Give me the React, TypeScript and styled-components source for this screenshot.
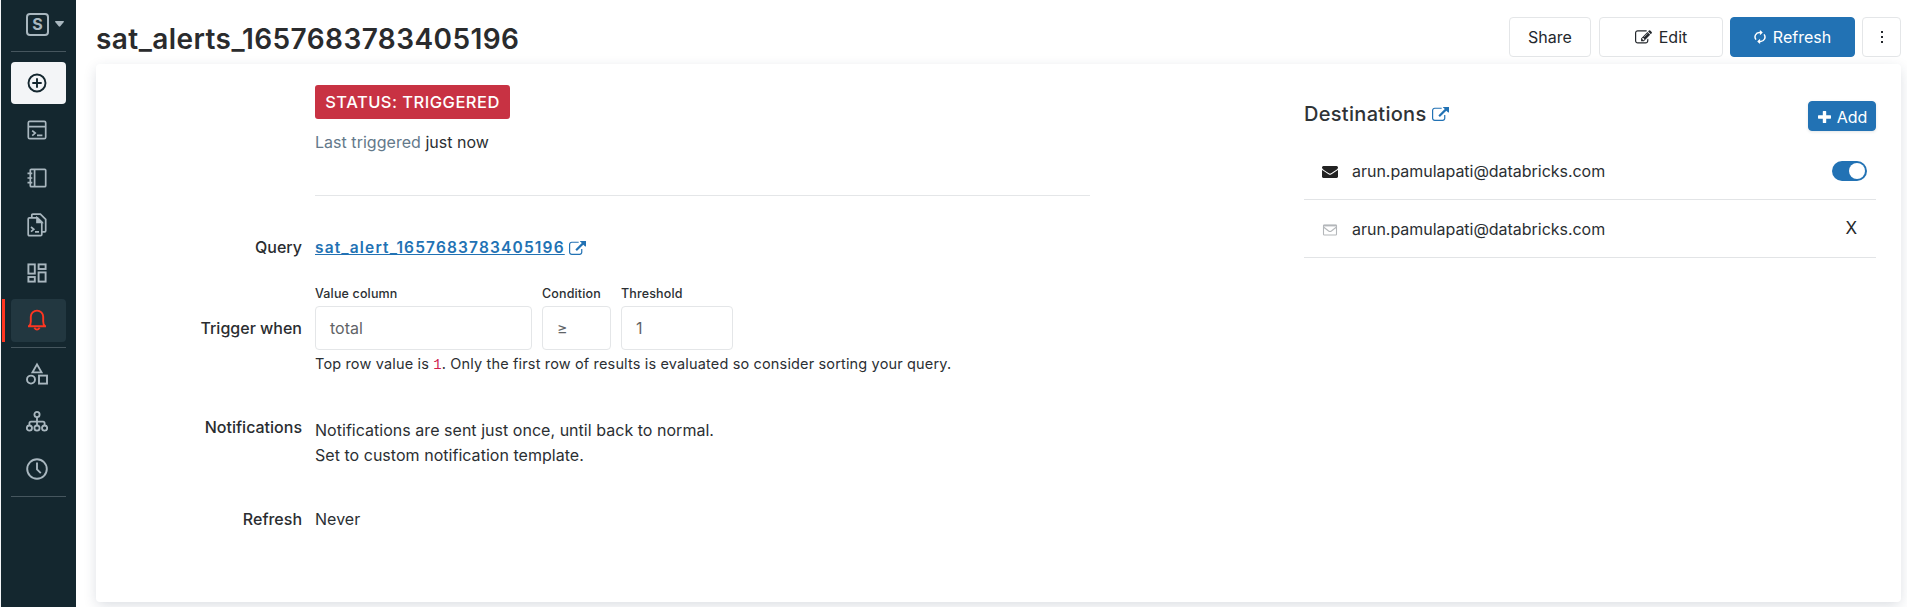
import React from 'react';
import styled, { createGlobalStyle, css } from 'styled-components';

const GlobalStyle = createGlobalStyle`
  *, *::before, *::after { box-sizing: border-box; }
  body {
    margin: 0;
    background: #fff;
    color: #2b2f33;
    font-family: Inter, 'Liberation Sans', sans-serif;
    font-size: 16px;
    overflow: hidden;
  }
  svg { display: block; flex: none; }
`;

const blue = '#2272b4';

const Page = styled.div`
  display: flex;
  height: 607px;
  overflow: hidden;
`;

/* ---------- Sidebar ---------- */

const Sidebar = styled.nav`
  display: flex;
  flex-direction: column;
  flex: none;
  width: 76px;
  border-left: 1px solid #f4f6f8;
  padding-left: 1px;
  background: #14272f;
  color: #a9b7bf;
`;

const Workspace = styled.div`
  display: flex;
  align-items: center;
  gap: 6px;
  height: 51px;
  padding: 0 0 3px 24px;
`;

const WorkspaceLetter = styled.span`
  display: grid;
  place-items: center;
  width: 23px;
  height: 23px;
  border: 2px solid currentColor;
  border-radius: 4px;
  font-size: 16px;
  font-weight: 700;
  line-height: 1;
`;

const Rule = styled.div`
  height: 1px;
  margin: 0 10px 0 9px;
  background: #46565e;
`;

const NavGroup = styled.div<{ $top: number; $gap: number; $bottom: number }>`
  display: flex;
  flex-direction: column;
  gap: ${(p) => p.$gap}px;
  padding: ${(p) => p.$top}px 0 ${(p) => p.$bottom}px;
`;

const NavItem = styled.div<{ $kind?: 'create' | 'active' }>`
  display: flex;
  align-items: center;
  justify-content: center;
  height: 42px;
  padding: 0 10px 0 6px;
  border-left: 3px solid transparent;
  ${(p) => p.$kind === 'active' && css`
    height: 43px;
    border-left-color: #ff3621;
    color: #ff3621;
  `}
  ${(p) => p.$kind === 'create' && css`color: #14272f;`}
`;

const NavTile = styled.span<{ $kind?: 'create' | 'active' }>`
  display: grid;
  place-items: center;
  width: 55px;
  height: 100%;
  padding-right: 3px;
  border-radius: 4px;
  background: ${(p) => (p.$kind === 'create' ? '#f3f5f7' : p.$kind === 'active' ? '#223740' : 'transparent')};
`;

/* ---------- Header ---------- */

const Main = styled.main`
  display: flex;
  flex-direction: column;
  flex: 1;
  min-width: 0;
  padding: 0 6px 5px 20px;
`;

const Header = styled.header`
  display: flex;
  justify-content: space-between;
  height: 64px;
  padding-top: 17px;
`;

const Title = styled.h1`
  margin: 5px 0 0;
  font-size: 28px;
  line-height: 34px;
  font-weight: 600;
  letter-spacing: 0.43px;
  color: #2a2b2d;
`;

const Actions = styled.div`
  display: flex;
  gap: 7px;
`;

const Button = styled.button<{ $width: number; $primary?: boolean }>`
  display: flex;
  align-items: center;
  justify-content: center;
  gap: 7px;
  width: ${(p) => p.$width}px;
  height: 40px;
  padding: 0;
  border: 1px solid ${(p) => (p.$primary ? blue : '#e4e6e8')};
  border-radius: 4px;
  background: ${(p) => (p.$primary ? blue : '#fff')};
  color: ${(p) => (p.$primary ? '#fff' : '#24282d')};
  font-family: inherit;
  font-size: 16px;
`;

const ShareButton = styled(Button)`
  margin-right: 1px;
`;

const AddButton = styled(Button)`
  height: 30px;
  gap: 6px;
  padding: 2px 0 0 1px;
  box-shadow: 0 1px 3px rgba(27, 49, 57, 0.12);
`;

/* ---------- Card ---------- */

const Card = styled.section`
  display: flex;
  flex: 1;
  border-radius: 4px;
  background: #fff;
  box-shadow: 0 4px 14px -1px rgba(27, 49, 75, 0.17);
`;

const Details = styled.div`
  width: 994px;
  padding-top: 21px;
`;

const Field = styled.div<{ $height: number }>`
  display: flex;
  height: ${(p) => p.$height}px;
`;

const FieldLabel = styled.div<{ $offset?: number }>`
  width: 206px;
  margin-right: 13px;
  padding-top: ${(p) => p.$offset || 0}px;
  text-align: right;
  font-weight: 500;
  line-height: 25px;
  color: #2a2d30;
`;

const FieldBody = styled.div<{ $offset?: number }>`
  flex: 1;
  padding-top: ${(p) => p.$offset || 0}px;
  line-height: 25px;
  letter-spacing: 0.03px;
`;

const StatusBody = styled(FieldBody)`
  flex: none;
  width: 775px;
  height: 111px;
  border-bottom: 1px solid #e4e6e8;
`;

const StatusBadge = styled.span`
  display: inline-flex;
  align-items: center;
  justify-content: center;
  width: 195px;
  height: 34px;
  border-radius: 3px;
  background: #c83243;
  color: #fff;
  font-weight: 500;
  font-size: 16.5px;
  letter-spacing: 0.48px;
`;

const LastTriggered = styled.div`
  margin-top: 11px;
  color: #2b2f33;

  span { color: #64798a; }
`;

const QueryLink = styled.a`
  display: inline-flex;
  align-items: center;
  gap: 4px;
  color: ${blue};

  span {
    font-size: 15.5px;
    font-weight: 600;
    letter-spacing: 1.16px;
    line-height: 18px;
    text-decoration: underline;
    text-decoration-skip-ink: none;
    text-underline-offset: 1px;
    text-decoration-thickness: 1px;
  }
`;

const Controls = styled.div`
  display: flex;
  gap: 10px;
`;

const Control = styled.div<{ $width: number }>`
  width: ${(p) => p.$width}px;
`;

const ControlLabel = styled.div`
  height: 24px;
  font-size: 12.5px;
  font-weight: 500;
  line-height: 24px;
  letter-spacing: 0.15px;
  white-space: nowrap;
`;

const ControlBox = styled.div`
  display: flex;
  align-items: center;
  height: 44px;
  padding-left: 14px;
  border: 1px solid #e4e6e8;
  border-radius: 4px;
  color: #5f6467;
`;

const Hint = styled.div`
  margin-top: 2px;
  font-size: 14.5px;
  line-height: 24px;
  letter-spacing: 0.155px;
  white-space: nowrap;
`;

const HintValue = styled.code`
  font-family: 'Liberation Mono', monospace;
  font-size: 14px;
  color: #d0214f;
`;

/* ---------- Destinations ---------- */

const Destinations = styled.aside`
  flex: 1;
  padding: 37px 25px 0 214px;
`;

const DestinationsHead = styled.div`
  display: flex;
  justify-content: space-between;
  height: 41px;
`;

const DestinationsTitle = styled.h2`
  display: flex;
  align-items: center;
  gap: 5px;
  height: 26px;
  margin: 0;
  font-size: 20px;
  font-weight: 500;
  letter-spacing: 0.3px;
  color: #2f3336;

  svg { color: ${blue}; }
`;

const Destination = styled.div`
  display: flex;
  align-items: center;
  height: 58px;
  padding: 0 9px 0 18px;
  border-bottom: 1px solid #e2e4e6;
`;

const DestinationIcon = styled.span<{ $muted?: boolean }>`
  width: 30px;
  padding-top: 3px;
  color: ${(p) => (p.$muted ? '#b4b7ba' : '#222')};
`;

const Address = styled.span`
  flex: 1;
  letter-spacing: -0.03px;
`;

const Toggle = styled.span`
  display: flex;
  justify-content: flex-end;
  width: 35px;
  height: 20px;
  padding: 2px;
  border-radius: 10px;
  background: ${blue};

  &::after {
    content: '';
    width: 16px;
    height: 16px;
    border-radius: 50%;
    background: #fff;
  }
`;

const Remove = styled.span`
  margin: -2px 10px 0 0;
  font-size: 17px;
  color: #26292c;
`;

/* ---------- Icons ---------- */

const stroke = { fill: 'none', stroke: 'currentColor', strokeWidth: 1.7 } as const;

const CaretIcon = () => (
  <svg width="9" height="6" viewBox="0 0 9 6" fill="currentColor"><path d="M.6 0h7.8q.8.2.4 1L5.3 5.2q-.8.9-1.6 0L.2 1Q-.2.2.6 0z" /></svg>
);
const PlusCircleIcon = () => (
  <svg width="20" height="20" viewBox="0 0 20 20" {...stroke} strokeWidth={1.9}><circle cx="10" cy="10" r="8.5" /><path d="M10 5.3v9.4M5.3 10h9.4" /></svg>
);
const EditorIcon = () => (
  <svg width="20" height="20" viewBox="0 0 20 20" {...stroke}><rect x="1.3" y="1.3" width="17.4" height="17.4" rx="1.4" /><path d="M1.3 6.7h17.4M5.2 10.6l3 2.5-3 2.5M10 15.4h5.4" /></svg>
);
const NotebookIcon = () => (
  <svg width="20" height="20" viewBox="0 0 20 20" {...stroke}><rect x="3.3" y="1.3" width="15.4" height="17.4" rx="1" /><path d="M7.6 1.3v17.4M.5 5.4h4.8M.5 10h4.8M.5 14.6h4.8" /></svg>
);
const QueriesIcon = () => (
  <svg width="20" height="24" viewBox="0 0 20 24" {...stroke}><path d="M1.2 6q0-1.2 1.2-1.2h8l4.4 4.4v12.2q0 1.2-1.2 1.2H2.4q-1.2 0-1.2-1.2z" /><path d="M10 4.8v4.6h4.8z" fill="currentColor" /><path d="M4.8 4.6V2.2q0-1 1-1h7.6l5.3 5.2v11.4q0 1-1 1h-2.6M4 14l2.8 2.3L4 18.6M8 18.8h4" /></svg>
);
const DashboardIcon = () => (
  <svg width="20" height="20" viewBox="0 0 20 20" {...stroke} strokeWidth={1.9}><rect x="1.4" y="1.4" width="6.4" height="9.2" /><rect x="11.6" y="1.4" width="7" height="4.6" /><rect x="1.4" y="14" width="6.4" height="4.6" /><rect x="11.6" y="9.4" width="7" height="9.2" /></svg>
);
const BellIcon = () => (
  <svg width="20" height="22" viewBox="0 0 20 22" {...stroke} strokeWidth={1.9}><path d="M1 17.2h18M2.2 16.8c1.4-1 1.6-2.2 1.6-4.3V7.8a6.2 6.2 0 0 1 12.4 0v4.7c0 2.1.2 3.3 1.6 4.3" /><path d="M7.3 18.8q2.7 3.6 5.4 0" /></svg>
);
const ShapesIcon = () => (
  <svg width="22" height="23" viewBox="0 0 22 23" {...stroke} strokeWidth={1.9}><path d="M11 2.4l4.5 8h-9z" /><circle cx="5" cy="17.6" r="4" /><rect x="13" y="13.6" width="8" height="8" /></svg>
);
const TreeIcon = () => (
  <svg width="22" height="21" viewBox="0 0 22 21" {...stroke} strokeWidth={1.8}><circle cx="11" cy="3.5" r="2.6" /><circle cx="3.4" cy="17.1" r="2.6" /><circle cx="11" cy="17.1" r="2.6" /><circle cx="18.6" cy="17.1" r="2.6" /><path d="M11 6.1v8.4M3.4 14.5v-2.2q0-1.6 1.6-1.6h12q1.6 0 1.6 1.6v2.2" /></svg>
);
const ClockIcon = () => (
  <svg width="22" height="22" viewBox="0 0 22 22" {...stroke} strokeWidth={1.9}><circle cx="11" cy="11" r="9.8" /><path d="M11 4.6v6.8l3.8 3.8" /></svg>
);
const ExternalIcon = () => (
  <svg width="17" height="14" viewBox="0 64 1792 1472" fill="currentColor"><path d="M1408 928v320q0 119-84.5 203.5t-203.5 84.5h-832q-119 0-203.5-84.5t-84.5-203.5v-832q0-119 84.5-203.5t203.5-84.5h704q14 0 23 9t9 23v64q0 14-9 23t-23 9h-704q-66 0-113 47t-47 113v832q0 66 47 113t113 47h832q66 0 113-47t47-113v-320q0-14 9-23t23-9h64q14 0 23 9t9 23zm384-864v512q0 26-19 45t-45 19-45-19l-176-176-652 652q-10 10-23 10t-23-10l-114-114q-10-10-10-23t10-23l652-652-176-176q-19-19-19-45t19-45 45-19h512q26 0 45 19t19 45z" /></svg>
);
const PencilIcon = () => (
  <svg width="17" height="17" viewBox="0 0 1792 1792" fill="currentColor"><path d="M888 1184l116-116-152-152-116 116v56h96v96h56zm440-720q-16-16-33 1l-350 350q-17 17-1 33t33-1l350-350q17-17 1-33zm80 594v190q0 119-84.5 203.5t-203.5 84.5h-832q-119 0-203.5-84.5t-84.5-203.5v-832q0-119 84.5-203.5t203.5-84.5h832q63 0 117 25 15 7 18 23 3 17-9 29l-49 49q-14 14-32 8-23-6-45-6h-832q-66 0-113 47t-47 113v832q0 66 47 113t113 47h832q66 0 113-47t47-113v-126q0-13 9-22l64-64q15-15 35-7t20 29zm-96-738l288 288-672 672h-288v-288zm444 132l-92 92-288-288 92-92q28-28 68-28t68 28l152 152q28 28 28 68t-28 68z" /></svg>
);
const SyncIcon = () => (
  <svg width="12" height="14" viewBox="0 0 12 14" fill="none" stroke="currentColor" strokeWidth="1.5"><path d="M7.6 2.6H5.4A4.3 4.3 0 0 0 2 9.6M4.4 11.4h2.2A4.3 4.3 0 0 0 10 4.4" /><path d="M5.9 0l2.9 2.6-2.9 2.6zM6.1 8.8l-2.9 2.6L6.1 14z" fill="currentColor" stroke="none" /></svg>
);
const KebabIcon = () => (
  <svg width="2" height="12" viewBox="0 0 2 12" fill="currentColor"><path d="M0 0h2v2H0zM0 5h2v2H0zM0 10h2v2H0z" /></svg>
);
const PlusIcon = () => (
  <svg width="13" height="12" viewBox="0 0 13 12" fill="currentColor"><path d="M5.4 0h2.2q.6 0 .6.6v3.7h4.2q.6 0 .6.6v2.2q0 .6-.6.6H8.2v3.7q0 .6-.6.6H5.4q-.6 0-.6-.6V7.7H.6Q0 7.7 0 7.1V4.9q0-.6.6-.6h4.2V.6q0-.6.6-.6z" /></svg>
);
const MailIcon = () => (
  <svg width="16" height="12" viewBox="0 256 1792 1408" preserveAspectRatio="none" fill="currentColor"><path d="M1792 710v794q0 66-47 113t-113 47h-1472q-66 0-113-47t-47-113v-794q44 49 101 87 362 246 497 345 57 42 92.5 65.5t94.5 48 110 24.5h2q51 0 110-24.5t94.5-48 92.5-65.5q170-123 498-345 57-39 100-87zm0-294q0 79-49 151t-122 123q-376 261-468 325-10 7-42.5 31t-54 38.5-52 32.5-57.5 27-50 9h-2q-23 0-50-9t-57.5-27-52-32.5-54-38.5-42.5-31q-91-64-262-182.5t-205-142.5q-62-42-117-115.5t-55-136.5q0-78 41.5-130t118.5-52h1472q65 0 112.5 47t47.5 113z" /></svg>
);
const MailOutlineIcon = () => (
  <svg width="16" height="12" viewBox="0 0 16 12" fill="none" stroke="currentColor" strokeWidth="1.1"><rect x="1.5" y="1" width="13" height="10" rx=".8" /><path d="M1.5 1.6h13" strokeWidth="1.6" /><path d="M1.8 3.2L6.6 7q1.4 1 2.8 0l4.8-3.8" /></svg>
);

/* ---------- Page ---------- */

const workspaceIcons = [EditorIcon, NotebookIcon, QueriesIcon, DashboardIcon];
const dataIcons = [ShapesIcon, TreeIcon, ClockIcon];

export default function App() {
  return (
    <Page>
      <GlobalStyle />
      <Sidebar>
        <Workspace><WorkspaceLetter>S</WorkspaceLetter><CaretIcon /></Workspace>
        <Rule />
        <NavGroup $top={10} $gap={5.4} $bottom={5}>
          <NavItem $kind="create"><NavTile $kind="create"><PlusCircleIcon /></NavTile></NavItem>
          {workspaceIcons.map((Icon, i) => <NavItem key={i}><NavTile><Icon /></NavTile></NavItem>)}
          <NavItem $kind="active"><NavTile $kind="active"><BellIcon /></NavTile></NavItem>
        </NavGroup>
        <Rule />
        <NavGroup $top={5} $gap={5.5} $bottom={6}>
          {dataIcons.map((Icon, i) => <NavItem key={i}><NavTile><Icon /></NavTile></NavItem>)}
        </NavGroup>
        <Rule />
      </Sidebar>
      <Main>
        <Header>
          <Title>sat_alerts_1657683783405196</Title>
          <Actions>
            <ShareButton $width={82}>Share</ShareButton>
            <Button $width={124}><PencilIcon />Edit</Button>
            <Button $width={125} $primary><SyncIcon />Refresh</Button>
            <Button $width={39}><KebabIcon /></Button>
          </Actions>
        </Header>
        <Card>
          <Details>
            <Field $height={150}>
              <FieldLabel />
              <StatusBody>
                <StatusBadge>STATUS: TRIGGERED</StatusBadge>
                <LastTriggered><span>Last triggered</span> just now</LastTriggered>
              </StatusBody>
            </Field>
            <Field $height={47}>
              <FieldLabel>Query</FieldLabel>
              <FieldBody><QueryLink><span>sat_alert_1657683783405196</span><ExternalIcon /></QueryLink></FieldBody>
            </Field>
            <Field $height={133}>
              <FieldLabel $offset={34}>Trigger when</FieldLabel>
              <FieldBody>
                <Controls>
                  <Control $width={217}><ControlLabel>Value column</ControlLabel><ControlBox>total</ControlBox></Control>
                  <Control $width={69}><ControlLabel>Condition</ControlLabel><ControlBox>≥</ControlBox></Control>
                  <Control $width={112}><ControlLabel>Threshold</ControlLabel><ControlBox>1</ControlBox></Control>
                </Controls>
                <Hint>Top row value is <HintValue>1</HintValue>. Only the first row of results is evaluated so consider sorting your query.</Hint>
              </FieldBody>
            </Field>
            <Field $height={92}>
              <FieldLabel>Notifications</FieldLabel>
              <FieldBody $offset={3}>
                Notifications are sent just once, until back to normal.<br />Set to custom notification template.
              </FieldBody>
            </Field>
            <Field $height={25}>
              <FieldLabel>Refresh</FieldLabel>
              <FieldBody>Never</FieldBody>
            </Field>
          </Details>
          <Destinations>
            <DestinationsHead>
              <DestinationsTitle>Destinations<ExternalIcon /></DestinationsTitle>
              <AddButton $width={68} $primary><PlusIcon />Add</AddButton>
            </DestinationsHead>
            <Destination>
              <DestinationIcon><MailIcon /></DestinationIcon>
              <Address>arun.pamulapati@databricks.com</Address>
              <Toggle />
            </Destination>
            <Destination>
              <DestinationIcon $muted><MailOutlineIcon /></DestinationIcon>
              <Address>arun.pamulapati@databricks.com</Address>
              <Remove>X</Remove>
            </Destination>
          </Destinations>
        </Card>
      </Main>
    </Page>
  );
}
